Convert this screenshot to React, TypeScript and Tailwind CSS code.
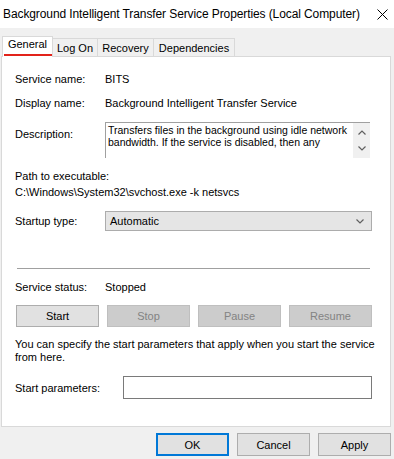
import React from 'react';

type Tab = { label: string; width: string };

const tabs: Tab[] = [
  { label: 'Log On', width: 'w-[46px]' },
  { label: 'Recovery', width: 'w-[57px]' },
  { label: 'Dependencies', width: 'w-[82px]' },
];

// Bouton standard Windows (actif ou grisé)
const WinButton: React.FC<{ label: string; disabled?: boolean; primary?: boolean; width: string; height: string }> = ({
  label,
  disabled,
  primary,
  width,
  height,
}) => {
  let cls = 'border border-[#adadad] bg-[#e1e1e1] text-black';
  if (disabled) cls = 'border border-[#bfbfbf] bg-[#cccccc] text-[#838383]';
  if (primary) cls = 'border-2 border-[#0078d7] bg-[#e1e1e1] text-black';
  return (
    <div className={`${width} ${height} ${cls} flex items-center justify-center text-[11px]`}>
      {label}
    </div>
  );
};

const Chevron: React.FC<{ up?: boolean; className?: string }> = ({ up, className }) => (
  <svg width="8" height="5" viewBox="0 0 8 5" className={className}>
    <path
      d={up ? 'M0.5 4.5 L4 1 L7.5 4.5' : 'M0.5 0.5 L4 4 L7.5 0.5'}
      fill="none"
      stroke="#606060"
      strokeWidth="1.2"
    />
  </svg>
);

export default function App() {
  return (
    <div className="w-[394px] h-[459px] overflow-hidden bg-[#f0f0f0] text-black font-['Liberation_Sans',Arial,sans-serif] text-[11px] leading-[14px]">
      {/* Barre de titre */}
      <div className="h-[28px] bg-white flex items-center justify-between pl-[3px] pr-[6px]">
        <span className="text-[12px] tracking-[-0.1px] whitespace-nowrap">
          Background Intelligent Transfer Service Properties (Local Computer)
        </span>
        <svg width="11" height="11" viewBox="0 0 11 11">
          <path d="M0.5 0.5 L10.5 10.5 M10.5 0.5 L0.5 10.5" stroke="#000" strokeWidth="1" />
        </svg>
      </div>

      {/* Onglets */}
      <div className="h-[28px] flex items-end pl-[2px]">
        <div className="relative z-10 -mb-px w-[51px] h-[21px] bg-white border-t border-l border-r border-[#d9d9d9] flex flex-col items-center pt-[1px]">
          <span className="leading-[13px]">General</span>
          <div className="mt-[3px] w-[48px] h-[2px] bg-[#e2231a]" />
        </div>
        {tabs.map((t) => (
          <div
            key={t.label}
            className={`${t.width} -ml-px h-[18px] border-t border-l border-r border-[#d9d9d9] flex items-center justify-center`}
          >
            {t.label}
          </div>
        ))}
      </div>

      {/* Panneau principal */}
      <div className="ml-[1px] w-[390px] h-[371px] bg-white border border-[#d9d9d9] pl-[13px] flex flex-col">
        <div className="mt-[15px] flex h-[14px]">
          <span className="w-[90px]">Service name:</span>
          <span>BITS</span>
        </div>
        <div className="mt-[10px] flex h-[14px]">
          <span className="w-[90px]">Display name:</span>
          <span>Background Intelligent Transfer Service</span>
        </div>

        <div className="mt-[12px] flex h-[36px]">
          <span className="w-[90px] pt-[5px]">Description:</span>
          <div className="w-[265px] h-[36px] border-t border-l border-[#a0a0a0] flex">
            <div className="flex-1 pl-[2px] pt-[1px] leading-[12px] text-[10.5px] whitespace-nowrap overflow-hidden">
              Transfers files in the background using idle network
              <br />
              bandwidth. If the service is disabled, then any
            </div>
            <div className="w-[17px] bg-[#f0f0f0] flex flex-col items-center pt-[7px] gap-[11px]">
              <Chevron up />
              <Chevron />
            </div>
          </div>
        </div>

        <div className="mt-[11px] h-[14px]">Path to executable:</div>
        <div className="mt-[2px] h-[14px]">C:\Windows\System32\svchost.exe -k netsvcs</div>

        <div className="mt-[12px] flex items-center h-[20px]">
          <span className="w-[90px]">Startup type:</span>
          <div className="w-[267px] h-[20px] bg-[#e5e5e5] border border-[#acacac] flex items-center justify-between pl-[4px] pr-[7px]">
            <span>Automatic</span>
            <Chevron />
          </div>
        </div>

        <div className="mt-[37px] ml-[2px] w-[353px] h-px bg-[#a0a0a0]" />

        <div className="mt-[11px] flex h-[14px]">
          <span className="w-[90px]">Service status:</span>
          <span>Stopped</span>
        </div>

        <div className="mt-[11px] ml-[1px] w-[356px] flex justify-between">
          <WinButton label="Start" width="w-[83px]" height="h-[22px]" />
          <WinButton label="Stop" disabled width="w-[83px]" height="h-[22px]" />
          <WinButton label="Pause" disabled width="w-[83px]" height="h-[22px]" />
          <WinButton label="Resume" disabled width="w-[83px]" height="h-[22px]" />
        </div>

        <div className="mt-[11px] leading-[13px] whitespace-nowrap">
          You can specify the start parameters that apply when you start the service
          <br />
          from here.
        </div>

        <div className="mt-[12px] flex items-center h-[23px]">
          <span className="w-[108px]">Start parameters:</span>
          <div className="w-[249px] h-[23px] bg-white border border-[#7a7a7a]" />
        </div>
      </div>

      {/* Boutons du bas */}
      <div className="mt-[6px] flex justify-end gap-[8px] pr-[3px]">
        <WinButton label="OK" primary width="w-[73px]" height="h-[23px]" />
        <WinButton label="Cancel" width="w-[73px]" height="h-[23px]" />
        <WinButton label="Apply" width="w-[73px]" height="h-[23px]" />
      </div>
    </div>
  );
}
